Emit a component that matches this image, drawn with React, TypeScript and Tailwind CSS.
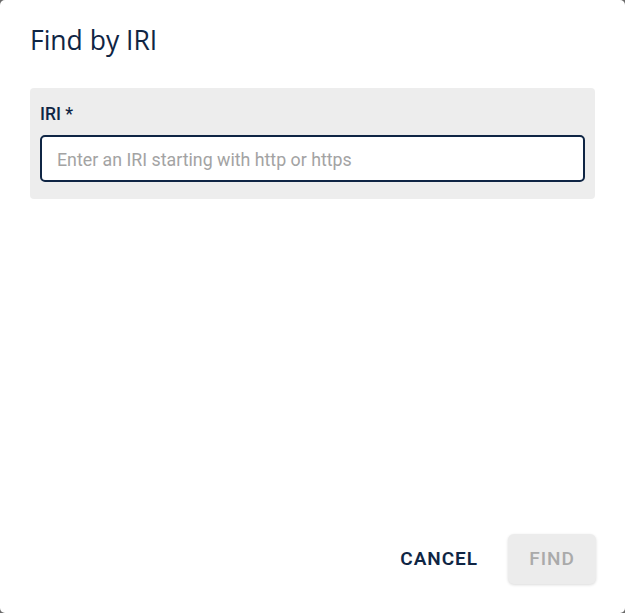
export default function App() {
  return (
    <div className="h-[613px] w-[625px] bg-[#6b6b6b]" style={{ fontFamily: "Roboto, sans-serif" }}>
      <div className="flex h-full w-full flex-col rounded-[5px] bg-white px-[30px]">
        <h2 className="pt-[23px] text-[26.5px] leading-[34px] text-[#0f2544]" style={{ fontFamily: "'Open Sans', sans-serif" }}>
          Find by IRI
        </h2>

        {/* Form panel */}
        <div className="mt-[31px] rounded-[4px] bg-[#ededed] px-[10px] pt-[13px] pb-[17px]">
          <label className="block text-[17.5px] font-medium leading-[26px] text-[#0f2544]">IRI *</label>
          <input
            className="mt-[8px] h-[47px] w-full rounded-[5px] border-2 border-[#0f2544] bg-white px-[15px] pt-[1px] text-[17.8px] text-[#0f2544] outline-none placeholder:text-[#a3a3a3]"
            placeholder="Enter an IRI starting with http or https"
          />
        </div>

        <div className="mt-auto mb-[29px] mr-[-1px] flex items-center justify-end gap-[30px]">
          <button className="text-[19px] font-semibold tracking-[0.05em] text-[#0f2544]">CANCEL</button>
          <button
            disabled
            className="h-[50px] w-[88px] rounded-[6px] bg-[#ececec] text-[19px] font-medium tracking-[0.05em] text-[#aaaaaa] shadow-[0_1px_3px_rgba(0,0,0,0.15)]"
          >
            FIND
          </button>
        </div>
      </div>
    </div>
  );
}
